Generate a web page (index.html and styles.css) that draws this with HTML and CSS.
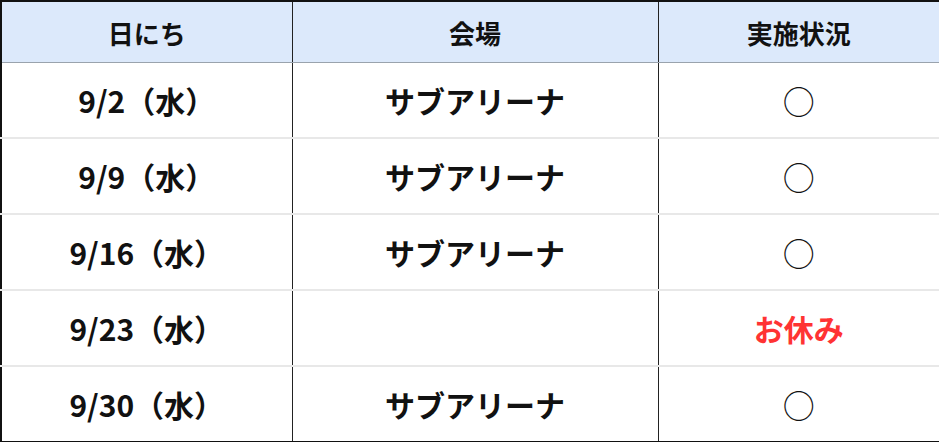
FILE: index.html
```html
<!DOCTYPE html>
<html lang="ja">
<head>
<meta charset="utf-8">
<link rel="stylesheet" href="styles.css">
</head>
<body>
<table class="schedule">
  <colgroup>
    <col class="c1"><col class="c2"><col class="c3">
  </colgroup>
  <thead>
    <tr><th>日にち</th><th>会場</th><th>実施状況</th></tr>
  </thead>
  <tbody>
    <tr><td>9/2（水）</td><td>サブアリーナ</td><td class="mark">○</td></tr>
    <tr><td>9/9（水）</td><td>サブアリーナ</td><td class="mark">○</td></tr>
    <tr><td>9/16（水）</td><td>サブアリーナ</td><td class="mark">○</td></tr>
    <tr><td>9/23（水）</td><td></td><td class="off">お休み</td></tr>
    <tr><td>9/30（水）</td><td>サブアリーナ</td><td class="mark">○</td></tr>
  </tbody>
</table>
</body>
</html>
```
FILE: styles.css
```css
html, body {
  margin: 0;
  padding: 0;
  background: #ffffff;
}
body {
  font-family: "Noto Sans CJK JP", "Noto Sans", sans-serif;
  color: #111111;
}
.schedule {
  width: 939px;
  height: 442px;
  border-collapse: collapse;
  table-layout: fixed;
  border: 2px solid #111111;
}
.c1 { width: 291px; }
.c2 { width: 366px; }
.c3 { width: 282px; }
.schedule th {
  background: #dce9fb;
  height: 60px;
  font-size: 26px;
  font-weight: 700;
  text-align: center;
  padding: 0;
  border-left: 1px solid #222222;
  border-bottom: 1px solid #9aa3ad;
}
.schedule td {
  height: 74px;
  font-size: 30px;
  font-weight: 700;
  text-align: center;
  padding: 0;
  border-left: 1px solid #222222;
  border-bottom: 2px solid #e8e8e8;
}
.schedule tbody tr:last-child td {
  border-bottom: none;
}
.schedule td.mark {
  font-weight: 400;
  font-size: 32px;
}
.schedule td.off {
  color: #ff3333;
}
```
